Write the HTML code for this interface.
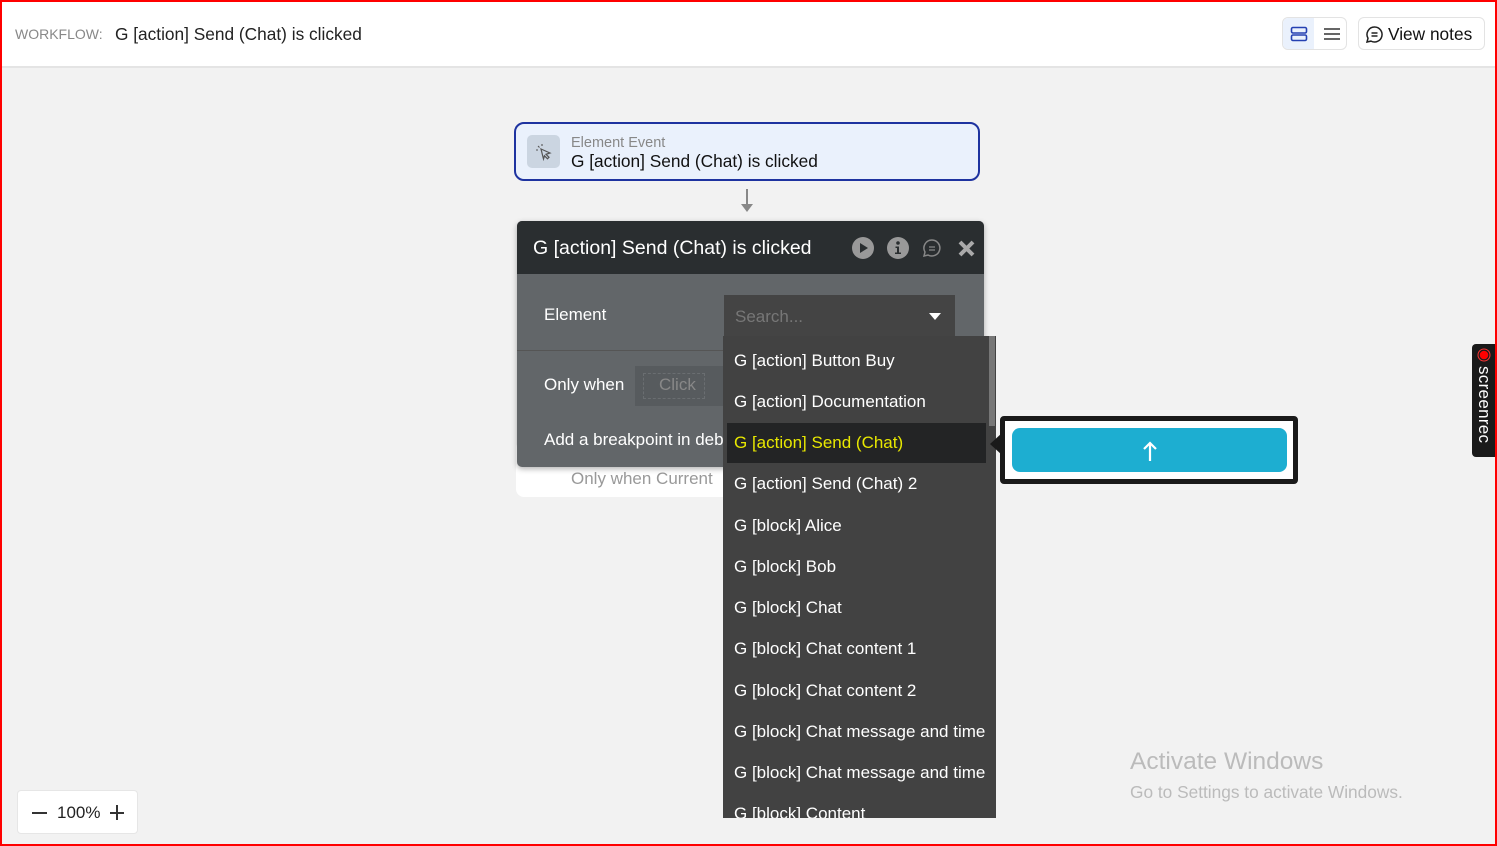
<!DOCTYPE html>
<html><head><meta charset="utf-8"><style>
*{box-sizing:border-box;margin:0;padding:0}
body{width:1497px;height:846px;overflow:hidden;background:#f2f2f2;font-family:"Liberation Sans",sans-serif;position:relative}
.frame{position:absolute;inset:0;border:2px solid #f00;pointer-events:none;z-index:50}
.top{position:absolute;left:0;top:0;width:1497px;height:68px;background:#fff;border-bottom:2px solid #e4e4e4}
.abs{position:absolute}
.item{position:absolute;left:11px;font-size:17px;color:#fff;white-space:nowrap}
</style></head><body>
<div class="top">
<div class="abs" style="left:15px;top:26px;font-size:14px;color:#888">WORKFLOW:</div>
<div class="abs" style="left:115px;top:24px;font-size:17.3px;color:#222">G [action] Send (Chat) is clicked</div>
<div class="abs" style="left:1282px;top:17px;width:65px;height:33px;border:1px solid #e3e3e3;border-radius:6px;overflow:hidden">
<div style="position:absolute;left:0;top:0;width:31px;height:33px;background:#eaf1fc"></div>
<svg class="abs" style="left:7px;top:8px" width="18" height="16"><rect x="1.5" y="1.5" width="15" height="5.5" rx="1.5" fill="none" stroke="#2541b2" stroke-width="1.6"/><rect x="1.5" y="9" width="15" height="5.5" rx="1.5" fill="none" stroke="#2541b2" stroke-width="1.6"/></svg>
<svg class="abs" style="left:40px;top:9px" width="18" height="14"><path d="M1 2H17M1 7H17M1 12H17" stroke="#333" stroke-width="1.6"/></svg>
</div>
<div class="abs" style="left:1358px;top:17px;width:127px;height:33px;border:1px solid #e3e3e3;border-radius:6px">
<svg class="abs" style="left:6px;top:7px" width="19" height="19"><path d="M9.5 2a7.5 7.5 0 1 1-3.5 14.1L2 17l1-3.8A7.5 7.5 0 0 1 9.5 2z" fill="none" stroke="#222" stroke-width="1.5"/><path d="M6.5 8h6M6.5 11h6" stroke="#222" stroke-width="1.4"/></svg>
<div class="abs" style="left:29px;top:6px;font-size:17.3px;color:#111">View notes</div>
</div>
</div>

<div class="abs" style="left:514px;top:122px;width:466px;height:59px;background:#eaf1fc;border:2px solid #1e33a0;border-radius:10px">
<div class="abs" style="left:11px;top:11px;width:33px;height:33px;background:#cbd5e1;border-radius:5px"></div>
<svg class="abs" style="left:19px;top:19px" width="18" height="18"><path d="M6 6l9 4-4 1.3 3 3-1.5 1.5-3-3L8.5 16z" fill="none" stroke="#555" stroke-width="1.2"/><path d="M3 3l1.5 1.5M1 7h2M7 1v2" stroke="#555" stroke-width="1.1"/></svg>
<div class="abs" style="left:55px;top:11px;font-size:14.5px;color:#888">Element Event</div>
<div class="abs" style="left:55px;top:27px;font-size:17.3px;color:#111">G [action] Send (Chat) is clicked</div>
</div>
<svg class="abs" style="left:739px;top:188px" width="16" height="26"><path d="M8 1V22" stroke="#888" stroke-width="2"/><path d="M2 16l6 8 6-8z" fill="#888"/></svg>

<div class="abs" style="left:516px;top:440px;width:240px;height:57px;background:#fff;border-radius:8px"></div>
<div class="abs" style="left:571px;top:469px;font-size:17px;color:#999">Only when Current</div>

<div class="abs" style="left:517px;top:221px;width:467px;height:246px;background:#626669;border-radius:5px;overflow:hidden;box-shadow:0 2px 6px rgba(0,0,0,.3)">
<div class="abs" style="left:0;top:0;width:467px;height:53px;background:#2a2e30"></div>
<div class="abs" style="left:16px;top:16px;font-size:19.5px;color:#fff">G [action] Send (Chat) is clicked</div>
<svg class="abs" style="left:335px;top:16px" width="22" height="22"><circle cx="11" cy="11" r="11" fill="#999"/><path d="M8 6l8 5-8 5z" fill="#2a2e30"/></svg>
<svg class="abs" style="left:370px;top:16px" width="22" height="22"><circle cx="11" cy="11" r="11" fill="#999"/><circle cx="11" cy="6" r="1.8" fill="#2a2e30"/><path d="M8.5 9.5h3.5v6h2v1.5h-6v-1.5h2v-4.5h-1.5z" fill="#2a2e30"/></svg>
<svg class="abs" style="left:405px;top:17px" width="20" height="20"><path d="M10 2a8 8 0 1 1-4 15L2 18l1-4A8 8 0 0 1 10 2z" fill="none" stroke="#888" stroke-width="1.5"/><path d="M7 9h6M7 12h6" stroke="#888" stroke-width="1.3"/></svg>
<svg class="abs" style="left:441px;top:19px" width="17" height="17"><path d="M2 2L15 15M15 2L2 15" stroke="#aaa" stroke-width="4"/></svg>
<div class="abs" style="left:27px;top:84px;font-size:17px;color:#fff">Element</div>
<div class="abs" style="left:0;top:129px;width:467px;height:1px;background:#555"></div>
<div class="abs" style="left:207px;top:74px;width:231px;height:42px;background:#444"></div>
<div class="abs" style="left:218px;top:86px;font-size:17px;color:#777">Search...</div>
<svg class="abs" style="left:411px;top:91px" width="14" height="9"><path d="M1 1h12L7 8z" fill="#fff"/></svg>
<div class="abs" style="left:27px;top:154px;font-size:17px;color:#fff">Only when</div>
<div class="abs" style="left:118px;top:145px;width:110px;height:40px;background:#575b5e"></div>
<div class="abs" style="left:126px;top:152px;width:62px;height:26px;border:1px dashed #6a6e71"></div>
<div class="abs" style="left:142px;top:154px;font-size:17px;color:#888">Click</div>
<div class="abs" style="left:27px;top:209px;font-size:17px;color:#fff">Add a breakpoint in debug mode</div>
</div>

<div class="abs" style="left:723px;top:336px;width:273px;height:482px;background:#424242;overflow:hidden">
<div class="abs" style="left:266px;top:0;width:6px;height:482px;background:#424242"></div>
<div class="abs" style="left:266px;top:0;width:6px;height:90px;background:#777"></div>
<div class="abs" style="left:4px;top:87px;width:259px;height:40px;background:#232425"></div>
<div class="item" style="top:15px">G [action] Button Buy</div>
<div class="item" style="top:56px">G [action] Documentation</div>
<div class="item" style="top:97px;color:#e8e800">G [action] Send (Chat)</div>
<div class="item" style="top:138px">G [action] Send (Chat) 2</div>
<div class="item" style="top:180px">G [block] Alice</div>
<div class="item" style="top:221px">G [block] Bob</div>
<div class="item" style="top:262px">G [block] Chat</div>
<div class="item" style="top:303px">G [block] Chat content 1</div>
<div class="item" style="top:345px">G [block] Chat content 2</div>
<div class="item" style="top:386px">G [block] Chat message and time</div>
<div class="item" style="top:427px">G [block] Chat message and time</div>
<div class="item" style="top:468px">G [block] Content</div>
</div>

<svg class="abs" style="left:988px;top:433px" width="14" height="22"><path d="M14 0L2 11 14 22z" fill="#1a1a1a"/></svg>
<div class="abs" style="left:1000px;top:416px;width:298px;height:68px;background:#fff;border:5px solid #1a1a1a;border-radius:4px">
<div class="abs" style="left:7px;top:7px;width:275px;height:44px;background:#1daed1;border-radius:8px"></div>
<svg class="abs" style="left:137px;top:19px" width="16" height="22"><path d="M8 21V3M2 9l6-6 6 6" fill="none" stroke="#fff" stroke-width="2.2"/></svg>
</div>

<div class="abs" style="left:1472px;top:344px;width:24px;height:113px;background:#1a1a1a;border-radius:4px 0 0 4px">
<svg class="abs" style="left:5px;top:4px" width="14" height="14"><circle cx="7" cy="7" r="6" fill="none" stroke="#f33" stroke-width="1"/><circle cx="7" cy="7" r="4.3" fill="#f00"/></svg>
<div class="abs" style="left:2px;top:22px;width:20px;font-size:17px;color:#fff;writing-mode:vertical-rl;line-height:20px;letter-spacing:0.3px">screenrec</div>
</div>

<div class="abs" style="left:1130px;top:748px;font-size:24.5px;color:#bbb">Activate Windows</div>
<div class="abs" style="left:1130px;top:782px;font-size:17.3px;color:#bbb">Go to Settings to activate Windows.</div>

<div class="abs" style="left:17px;top:790px;width:121px;height:44px;background:#fff;border:1px solid #e6e6e6;border-radius:4px">
<div class="abs" style="left:14px;top:21px;width:15px;height:1.5px;background:#333"></div>
<div class="abs" style="left:39px;top:12px;font-size:17px;color:#222">100%</div>
<div class="abs" style="left:92px;top:21px;width:14px;height:1.5px;background:#333"></div>
<div class="abs" style="left:98px;top:14px;width:1.5px;height:15px;background:#333"></div>
</div>
<div class="frame"></div>
</body></html>
